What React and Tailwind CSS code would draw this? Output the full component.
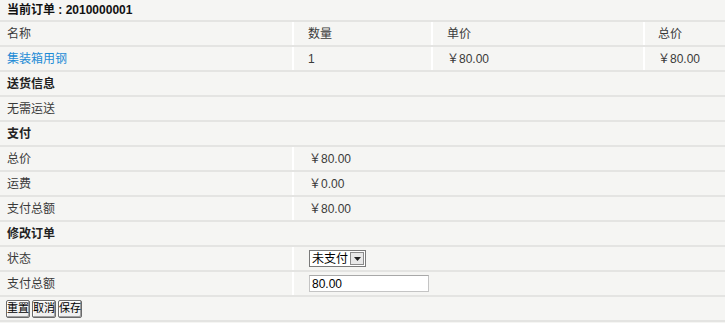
import React from 'react';

const font = { fontFamily: '"Liberation Sans", "Noto Sans CJK SC", sans-serif' };

const Row = ({ children, className = '' }) => (
  <div className={`flex h-[25px] border-b-2 border-[#e4e4e2] ${className}`}>{children}</div>
);

const Cell = ({ children, className = '' }) => (
  <div className={`flex items-center h-full ${className}`}>{children}</div>
);

const Section = ({ title }) => (
  <Row>
    <Cell className="pl-[7px] font-bold text-[#222]">{title}</Cell>
  </Row>
);

const Pair = ({ label, children }) => (
  <Row>
    <Cell className="w-[292px] pl-[7px]">{label}</Cell>
    <Cell className="flex-1 border-l-2 border-white pl-[15px]">{children}</Cell>
  </Row>
);

const Btn = ({ children }) => (
  <button className="w-[24px] h-[18px] text-[11px] leading-none bg-[#f0f0f0] border border-[#6a6a6a] rounded-[2px] shadow-[inset_-1px_-1px_0_#a0a0a0,inset_1px_1px_0_#fff] text-black">
    {children}
  </button>
);

const App = () => {
  return (
    <div className="w-[725px] h-[323px] bg-[#f5f5f3] text-[12px] text-[#3a3a3a]" style={font}>
      <div className="flex items-center h-[22px] pl-[7px] font-bold text-[#111] border-b-2 border-[#e4e4e2]">
        当前订单 : 2010000001
      </div>

      <Row>
        <Cell className="w-[292px] pl-[7px]">名称</Cell>
        <Cell className="w-[139px] border-l-2 border-white pl-[14px]">数量</Cell>
        <Cell className="w-[212px] border-l-2 border-white pl-[14px]">单价</Cell>
        <Cell className="flex-1 border-l-2 border-white pl-[13px]">总价</Cell>
      </Row>
      <Row>
        <Cell className="w-[292px] pl-[7px]">
          <a href="#" className="text-[#1c8bd6]">集装箱用钢</a>
        </Cell>
        <Cell className="w-[139px] border-l-2 border-white pl-[14px]">1</Cell>
        <Cell className="w-[212px] border-l-2 border-white pl-[14px]">￥80.00</Cell>
        <Cell className="flex-1 border-l-2 border-white pl-[13px]">￥80.00</Cell>
      </Row>

      <Section title="送货信息" />
      <Row>
        <Cell className="pl-[7px]">无需运送</Cell>
      </Row>

      <Section title="支付" />
      <Pair label="总价">￥80.00</Pair>
      <Pair label="运费">￥0.00</Pair>
      <Pair label="支付总额">￥80.00</Pair>

      <Section title="修改订单" />
      <Pair label="状态">
        <div className="flex items-center h-[17px] border border-[#7a7a7a] bg-white">
          <span className="px-[2px] text-black">未支付</span>
          <span className="flex items-center justify-center w-[14px] h-[13px] mr-[1px] bg-[#e8e8e8] border border-[#8a8a8a]">
            <svg width="7" height="4" viewBox="0 0 7 4">
              <path d="M0 0h7L3.5 4z" fill="#222" />
            </svg>
          </span>
        </div>
      </Pair>
      <Pair label="支付总额">
        <input
          defaultValue="80.00"
          className="w-[120px] h-[17px] px-[2px] bg-white border border-[#c4c4c4] border-t-[#a8a8a8] text-[12px] text-black outline-none"
        />
      </Pair>

      <Row>
        <Cell className="pl-[6px] gap-[2px]">
          <Btn>重置</Btn>
          <Btn>取消</Btn>
          <Btn>保存</Btn>
        </Cell>
      </Row>
    </div>
  );
};

export default App;
